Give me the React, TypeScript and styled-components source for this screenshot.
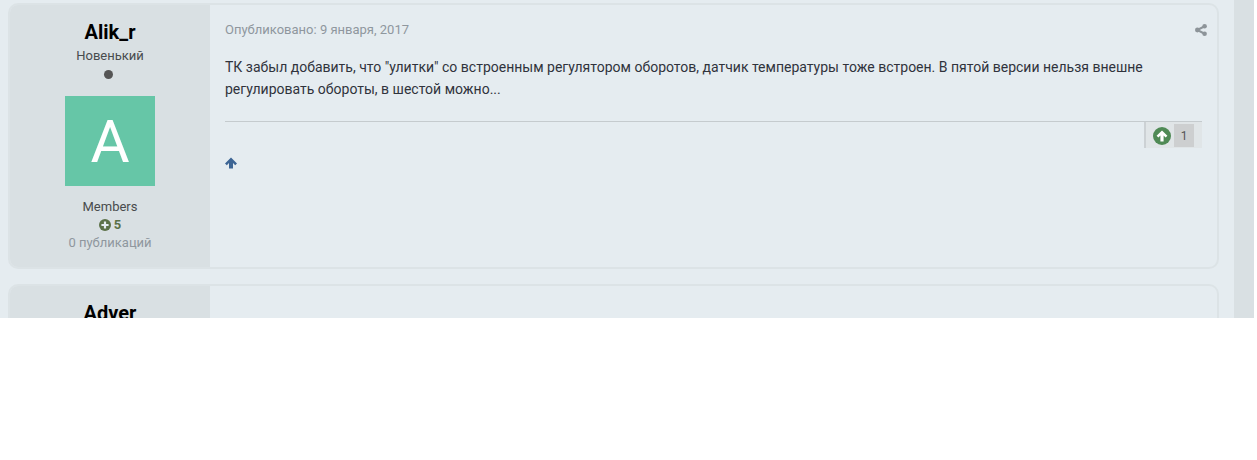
import { createGlobalStyle } from "styled-components";
import styled from "styled-components";

const GlobalStyle = createGlobalStyle`
  html, body {
    margin: 0;
    padding: 0;
    background: #fff;
  }
  body {
    font-family: Roboto, "Liberation Sans", sans-serif;
  }
`;

const Viewport = styled.div`
  height: 318px;
  width: 1257px;
  display: flex;
  overflow: hidden;
  background: #e5ecf0;
`;

const Feed = styled.div`
  width: 1219px;
  padding: 3px 0 0 8px;
  margin-right: 15px;
  box-sizing: border-box;
  display: flex;
  flex-direction: column;
  gap: 15px;
  flex: none;
`;

const Rail = styled.div`
  width: 20px;
  background: #d9e0e3;
  flex: none;
`;

const RailGap = styled.div`
  flex: 1;
  background: #fff;
`;

const Post = styled.article`
  display: flex;
  flex: none;
  height: 266px;
  box-sizing: border-box;
  border: 2px solid #dce3e6;
  border-radius: 10px;
  overflow: hidden;
  background: #e5ecf0;
`;

const Author = styled.aside`
  width: 200px;
  flex: none;
  background: #d9e0e3;
  display: flex;
  flex-direction: column;
  align-items: center;
  padding-top: 16px;
  margin-left: -2px;
  margin-top: -2px;
  padding-left: 2px;
  box-sizing: content-box;
`;

const Name = styled.h3`
  margin: 0;
  font-size: 20px;
  line-height: 26px;
  font-weight: 700;
  color: #000;
`;

const Rank = styled.div`
  font-size: 13px;
  line-height: 20px;
  margin-top: 1px;
  color: #484b4d;
`;

const Pip = styled.span`
  width: 9px;
  height: 9px;
  border-radius: 50%;
  background: #555;
  margin-top: 4px;
  margin-right: 3px;
`;

const Avatar = styled.div`
  width: 90px;
  height: 90px;
  margin-top: 17px;
  background: #66c6a7;
  color: #fff;
  font-size: 60px;
  display: flex;
  align-items: center;
  justify-content: center;
`;

const Group = styled.div`
  margin-top: 12px;
  font-size: 13px;
  line-height: 18px;
  color: #484b4d;
`;

const Reputation = styled.div`
  display: flex;
  align-items: center;
  gap: 3px;
  font-size: 13px;
  line-height: 18px;
  font-weight: 700;
  color: #5c7148;
`;

const PostCount = styled.div`
  font-size: 13px;
  line-height: 18px;
  color: #8f979e;
`;

const Body = styled.div`
  flex: 1;
  min-width: 0;
  padding: 15px 15px 0 15px;
`;

const Meta = styled.div`
  display: flex;
  justify-content: space-between;
  align-items: center;
  margin-right: -5px;
  font-size: 13px;
  line-height: 20px;
  color: #8f979e;
`;

const Text = styled.p`
  margin: 16px 0 0;
  font-size: 14px;
  line-height: 22px;
  color: #30333c;
`;

const Reactions = styled.div`
  margin-top: 21px;
  border-top: 1px solid #c5cbce;
  display: flex;
  justify-content: flex-end;
`;

const ReactionBox = styled.div`
  display: flex;
  align-items: center;
  height: 26px;
  padding: 0 8px 0 7px;
  background: #e0e5e7;
  border-left: 2px solid #ccd1d4;
  gap: 3px;
`;

const ReactionIcon = styled.span`
  display: flex;
  margin-top: 2px;
`;

const ReactionCount = styled.span`
  width: 20px;
  height: 23px;
  margin-top: 1px;
  background: #cdcfd0;
  font-size: 12px;
  color: #555;
  display: flex;
  align-items: center;
  justify-content: center;
`;

const UpLink = styled.div`
  margin-top: 9px;
  height: 12px;
  display: flex;
`;

const ShareIcon = () => (
  <svg width="12" height="12" viewBox="0 0 12 12" fill="#8d9499">
    <circle cx="2.4" cy="6" r="2.4" />
    <circle cx="9.6" cy="2.3" r="2.3" />
    <circle cx="9.6" cy="9.7" r="2.3" />
    <path d="M2 5 9.2 1.3 10 3.2 2.8 7zM2.8 5 10 8.8 9.2 10.7 2 7z" />
  </svg>
);

const UpCircle = () => (
  <svg width="18" height="18" viewBox="0 0 18 18">
    <circle cx="9" cy="9" r="9" fill="#4f8a55" />
    <path d="M9 3.4 14.4 8.8 12.6 10.6 10.6 8.6V14.4H7.4V8.6L5.4 10.6 3.6 8.8z" fill="#fff" />
  </svg>
);

const PlusCircle = () => (
  <svg width="12" height="12" viewBox="0 0 12 12">
    <circle cx="6" cy="6" r="6" fill="#5c7148" />
    <path d="M4.9 2.4h2.2v2.5h2.5v2.2H7.1v2.5H4.9V7.1H2.4V4.9h2.5z" fill="#e5ecf0" />
  </svg>
);

const UpArrow = () => (
  <svg width="12" height="12" viewBox="0 0 12 12">
    <path d="M6 .5 12 6.5 10.2 8.3 8 6.1V11.5H4V6.1L1.8 8.3 0 6.5z" fill="#3d6594" />
  </svg>
);

export default function App() {
  return (
    <>
      <GlobalStyle />
      <Viewport>
        <Feed>
          <Post>
            <Author>
              <Name>Alik_r</Name>
              <Rank>Новенький</Rank>
              <Pip />
              <Avatar>A</Avatar>
              <Group>Members</Group>
              <Reputation>
                <PlusCircle />5
              </Reputation>
              <PostCount>0 публикаций</PostCount>
            </Author>
            <Body>
              <Meta>
                <span>Опубликовано: 9 января, 2017</span>
                <ShareIcon />
              </Meta>
              <Text>
                ТК забыл добавить, что "улитки" со встроенным регулятором оборотов, датчик температуры тоже встроен. В пятой версии нельзя внешне регулировать обороты, в шестой можно...
              </Text>
              <Reactions>
                <ReactionBox>
                  <ReactionIcon>
                    <UpCircle />
                  </ReactionIcon>
                  <ReactionCount>1</ReactionCount>
                </ReactionBox>
              </Reactions>
              <UpLink>
                <UpArrow />
              </UpLink>
            </Body>
          </Post>
          <Post>
            <Author>
              <Name>Adver</Name>
            </Author>
            <Body />
          </Post>
        </Feed>
        <Rail />
        <RailGap />
      </Viewport>
    </>
  );
}
